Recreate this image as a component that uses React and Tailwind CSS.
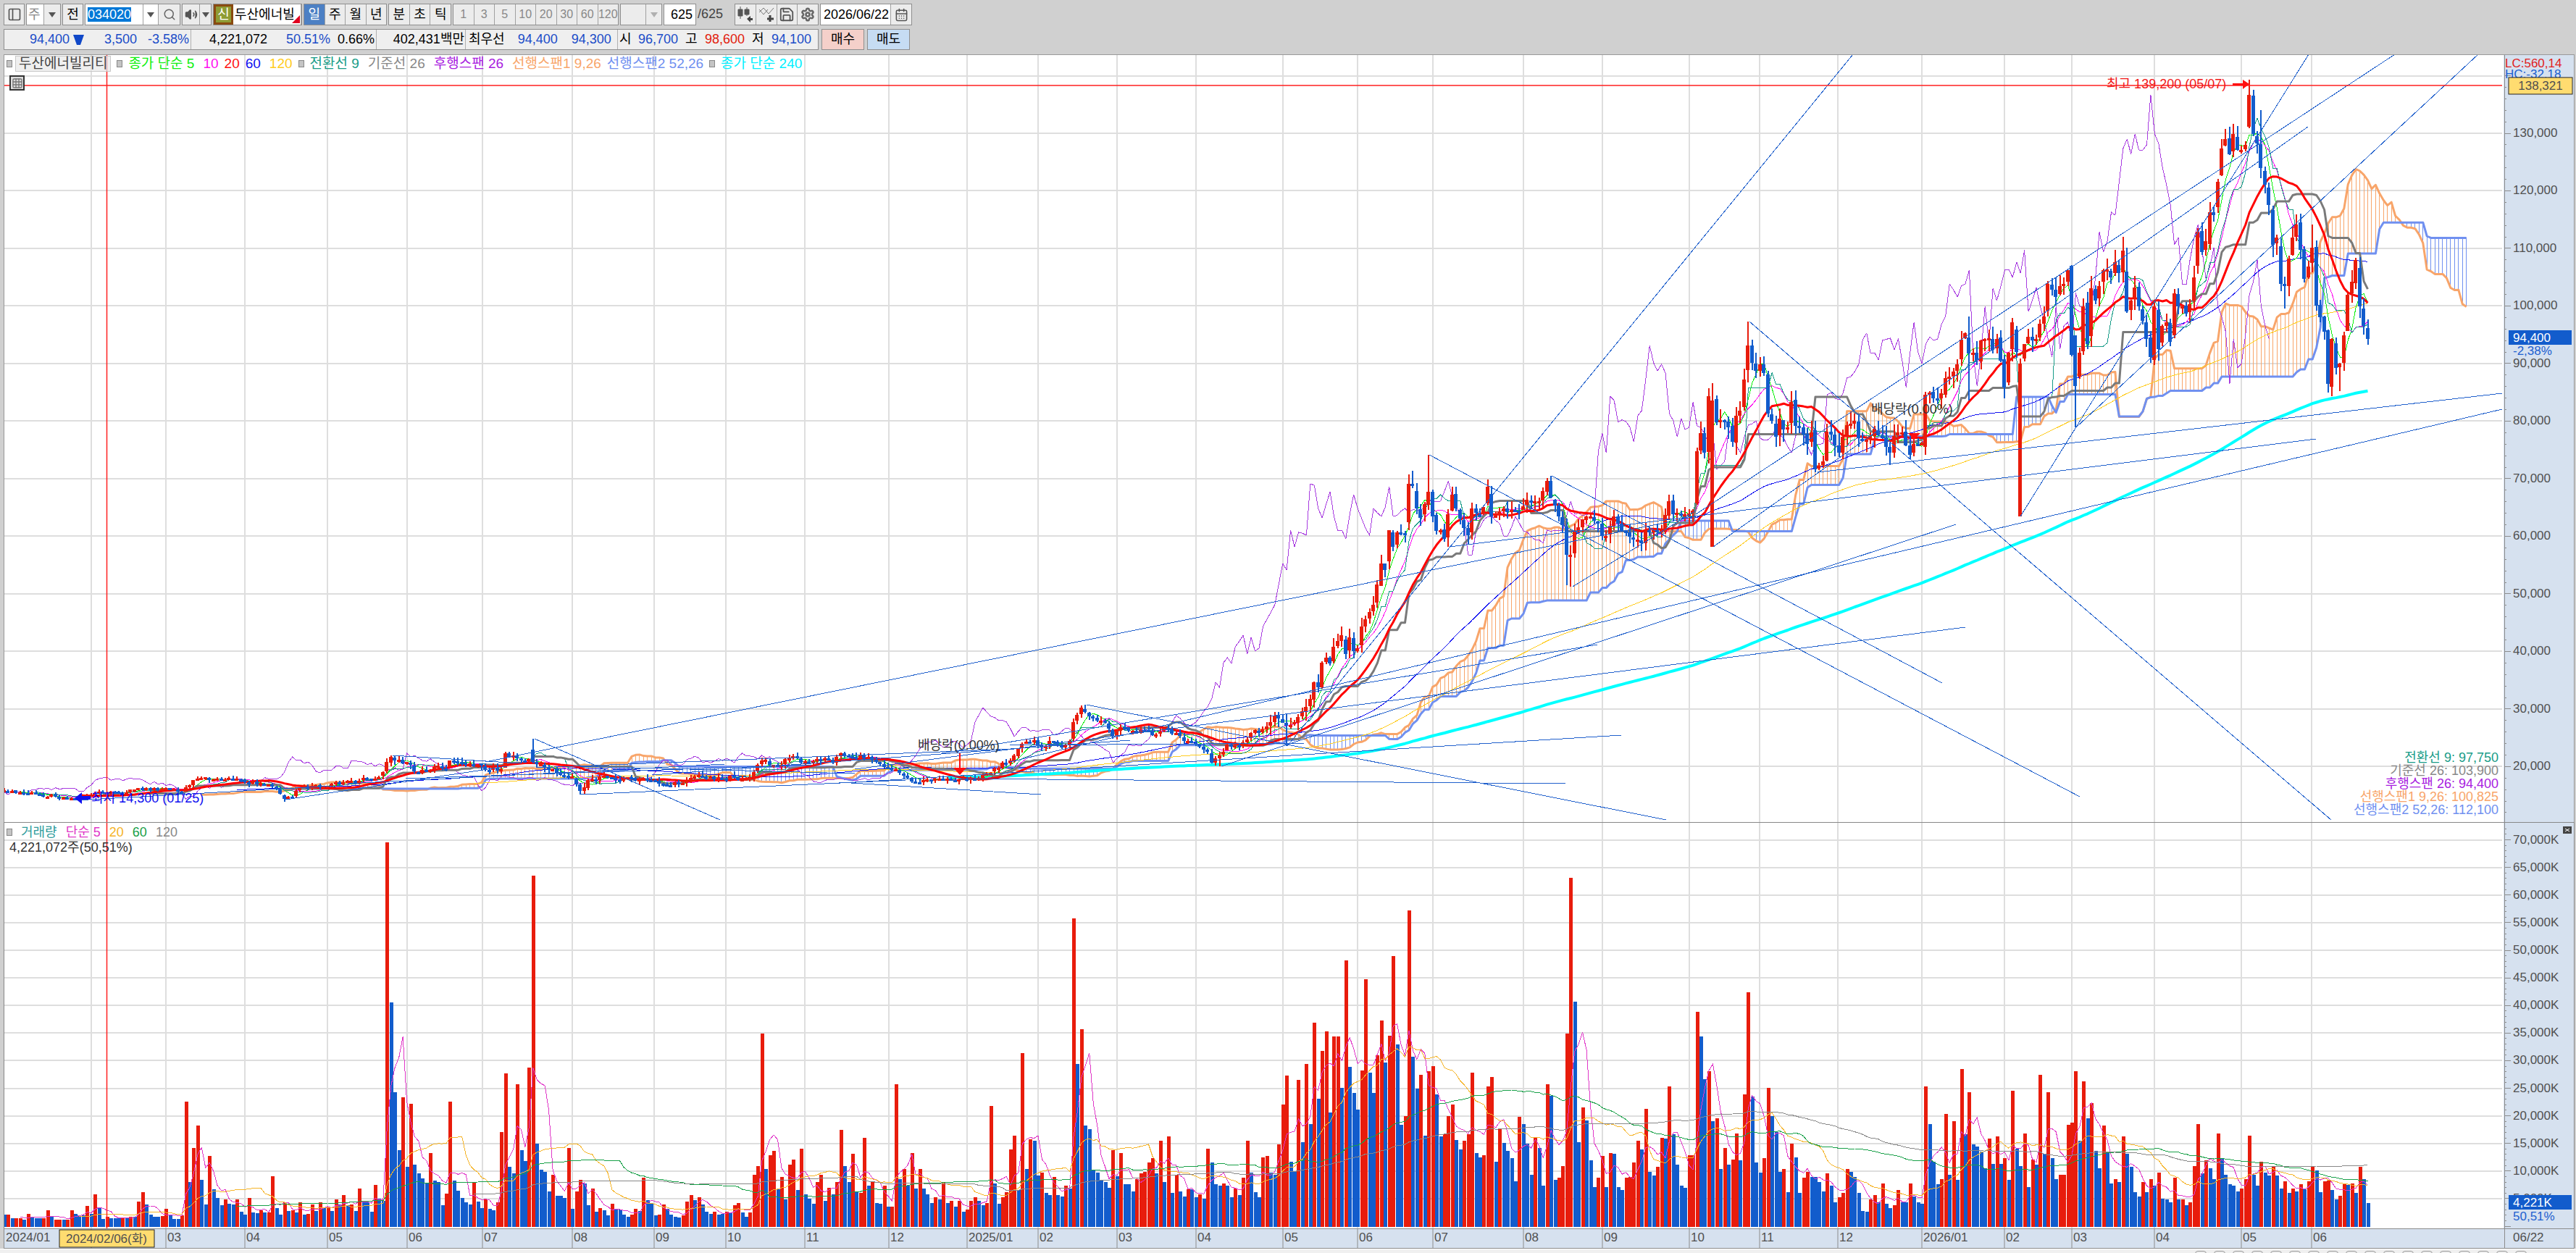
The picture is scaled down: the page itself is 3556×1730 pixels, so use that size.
import {
  Search,
  Volume2,
  Save,
  Settings,
  CalendarDays,
  PanelLeft,
  Grid3x3,
} from "lucide-react";

const BAR_COUNT = 600;
const BAR_STEP = 3262.5 / 599;
const FIRST_X = 6;
const SHIFT = 25;

const barX = (i) => FIRST_X + i * BAR_STEP;
const barIndex = (x) => Math.round((x - FIRST_X) / BAR_STEP);
const priceY = (p) => 184 + (130 - p) * 7.949;
const volumeY = (v) => 1693 - (v / 5) * 38.1;

// small repeatable wobble so the wicks differ from bar to bar
const wobble = (i) => {
  const n = Math.sin(i * 12.9898) * 43758.5453;
  return n - Math.floor(n);
};

// x, y pairs of the closing price on the chart canvas
const CLOSES = [
  6, 1091, 13, 1094, 50, 1096, 75, 1100, 105, 1103, 125, 1097, 136, 1093, 149, 1097, 200, 1088, 232, 1088,
  251, 1093, 275, 1075, 321, 1076, 337, 1080, 356, 1083, 378, 1085, 394, 1103, 401, 1100, 417, 1088, 455, 1085,
  484, 1078, 526, 1073, 540, 1045, 546, 1050, 560, 1052, 571, 1065, 592, 1063, 598, 1058, 614, 1061, 624, 1050,
  646, 1054, 665, 1057, 678, 1063, 691, 1062, 698, 1040, 713, 1047, 738, 1052, 748, 1055, 767, 1067, 793, 1072,
  802, 1092, 812, 1077, 838, 1073, 901, 1077, 927, 1085, 959, 1072, 978, 1073, 1029, 1075, 1036, 1073, 1053, 1050,
  1076, 1057, 1096, 1044, 1108, 1053, 1139, 1047, 1150, 1053, 1162, 1040, 1177, 1045, 1200, 1045, 1217, 1055, 1248, 1070,
  1263, 1080, 1294, 1075, 1334, 1077, 1357, 1070, 1378, 1060, 1398, 1043, 1409, 1027, 1426, 1022, 1438, 1032, 1449, 1023,
  1464, 1032, 1477, 1023, 1484, 997, 1494, 977, 1504, 989, 1524, 997, 1539, 1017, 1549, 1004, 1570, 1010, 1584, 1008,
  1592, 1015, 1610, 1005, 1624, 1012, 1636, 1023, 1653, 1028, 1667, 1038, 1675, 1053, 1685, 1043, 1696, 1028, 1712, 1030,
  1725, 1012, 1742, 1007, 1760, 988, 1776, 1002, 1786, 997, 1798, 982, 1807, 965, 1816, 942, 1820, 949, 1826, 915,
  1832, 908, 1837, 916, 1842, 893, 1852, 877, 1859, 903, 1864, 880, 1870, 899, 1875, 895, 1880, 865, 1886, 855,
  1897, 835, 1902, 807, 1908, 778, 1912, 787, 1919, 732, 1925, 755, 1930, 735, 1939, 739, 1946, 668, 1951, 670,
  1956, 702, 1962, 715, 1973, 679, 1978, 713, 1984, 733, 1989, 732, 1995, 744, 2000, 710, 2006, 683, 2012, 702,
  2027, 739, 2033, 702, 2042, 713, 2049, 700, 2055, 672, 2060, 713, 2073, 702, 2083, 707, 2098, 705, 2111, 690,
  2126, 692, 2137, 664, 2142, 687, 2150, 713, 2158, 725, 2164, 766, 2170, 766, 2176, 733, 2188, 713, 2197, 713,
  2207, 723, 2213, 740, 2219, 740, 2229, 713, 2241, 733, 2264, 727, 2267, 750, 2274, 732, 2293, 732, 2305, 692,
  2312, 710, 2322, 712, 2336, 705, 2343, 623, 2348, 598, 2355, 625, 2360, 547, 2365, 553, 2370, 583, 2378, 573,
  2382, 582, 2387, 590, 2392, 610, 2398, 574, 2404, 567, 2409, 524, 2414, 477, 2420, 501, 2425, 512, 2431, 503,
  2436, 515, 2442, 571, 2447, 581, 2452, 603, 2458, 578, 2463, 593, 2468, 590, 2474, 555, 2481, 588, 2486, 590,
  2493, 613, 2500, 597, 2507, 648, 2512, 643, 2517, 637, 2523, 596, 2529, 600, 2536, 607, 2540, 625, 2545, 603,
  2550, 587, 2556, 585, 2561, 581, 2567, 605, 2573, 608, 2582, 602, 2588, 592, 2600, 605, 2605, 617, 2611, 625,
  2616, 602, 2621, 597, 2626, 597, 2632, 615, 2638, 628, 2643, 613, 2654, 612, 2659, 545, 2665, 542, 2671, 550,
  2676, 552, 2682, 543, 2687, 522, 2692, 520, 2698, 513, 2703, 503, 2708, 469, 2714, 460, 2719, 488, 2724, 487,
  2731, 497, 2736, 470, 2746, 467, 2751, 483, 2758, 468, 2763, 498, 2768, 535, 2774, 487, 2779, 445, 2785, 486,
  2790, 502, 2795, 475, 2801, 465, 2806, 470, 2812, 468, 2817, 447, 2823, 437, 2828, 392, 2834, 400, 2839, 410,
  2845, 395, 2850, 392, 2855, 373, 2861, 490, 2866, 533, 2872, 487, 2877, 423, 2882, 475, 2888, 398, 2893, 415,
  2899, 395, 2904, 373, 2910, 372, 2915, 383, 2921, 362, 2926, 377, 2931, 346, 2937, 430, 2942, 415, 2948, 397,
  2953, 423, 2959, 443, 2964, 468, 2969, 493, 2975, 423, 2980, 482, 2986, 450, 2991, 445, 2996, 472, 3002, 405,
  3007, 423, 3013, 423, 3019, 433, 3024, 420, 3029, 383, 3035, 320, 3040, 348, 3046, 333, 3051, 293, 3057, 297,
  3062, 251, 3068, 205, 3073, 192, 3079, 213, 3084, 185, 3089, 207, 3095, 207, 3100, 200, 3106, 131, 3111, 185,
  3117, 198, 3122, 232, 3127, 255, 3133, 283, 3138, 338, 3143, 328, 3149, 392, 3155, 393, 3160, 357, 3166, 328,
  3171, 310, 3176, 345, 3182, 385, 3187, 368, 3193, 342, 3198, 422, 3204, 438, 3209, 458, 3215, 530, 3220, 468,
  3225, 508, 3230, 502, 3236, 463, 3242, 407, 3247, 389, 3253, 359, 3258, 423, 3263, 450, 3269, 468,
];

// x, high, low, where a wick runs out further than its neighbours; null keeps the default
const SPIKES = [
  [105, null, 1105],
  [738, 1020, null],
  [802, null, 1097],
  [1500, 973, null],
  [1686, null, 1058],
  [1777, null, 1030],
  [1951, 650, null],
  [1973, 628, null],
  [2001, null, 755],
  [2142, 657, null],
  [2164, null, 808],
  [2171, null, 810],
  [2365, 529, 755],
  [2415, 444, null],
  [2507, null, 652],
  [2719, 437, 553],
  [2790, 495, 713],
  [2866, null, 590],
  [2861, 366, null],
  [2931, 327, null],
  [3106, 110, null],
  [3122, 152, null],
  [3155, null, 426],
  [3192, 310, null],
  [3215, null, 542],
  [3230, null, 540],
];

// bars whose body starts away from the previous close
const OPENS = [
  [738, 1035],
  [2343, 695],
  [2365, 755],
  [2790, 713],
  [2861, 367],
  [2866, 463],
  [2937, 375],
  [3106, 175],
];

// x and bar height, below zero for a falling day
const VOLUMES = [
  6, -17, 11, 17, 21, 12, 27, 12, 34, -10, 40, 18, 45, -14, 56, -12, 67, 23, 73, -15, 90, -10, 100, 23, 106, -18,
  115, -16, 122, 29, 128, -18, 133, 45, 138, -26, 143, -11, 150, 14, 156, 19, 161, -12, 175, -12, 183, 14, 193, 35, 199, 48, 203, -31,
  209, -17, 219, -14, 225, 15, 230, 25, 236, -17, 247, -11, 252, 16, 257, 173, 263, -62, 268, 109, 274, 140, 279, -65, 285, -31,
  290, 98, 296, -52, 302, -40, 307, -30, 313, 38, 318, -32, 323, -31, 330, 38, 335, -21, 340, -17, 345, 40, 350, -20, 356, -19,
  361, 23, 366, -20, 372, 20, 377, 70, 383, -26, 388, -17, 394, 34, 399, -22, 405, 23, 410, -20, 416, 34, 421, -17, 426, 18,
  432, 31, 437, -22, 443, 34, 448, -26, 454, 28, 459, -22, 464, 38, 470, -31, 476, 44, 481, -30, 486, 31, 492, -22, 497, 53,
  503, -34, 508, -34, 513, -21, 520, 58, 525, -39, 530, -36, 536, 531, 541, -310, 546, -186, 552, -106, 558, 179, 563, -83,
  568, 170, 574, -86, 579, -74, 585, -67, 590, -60, 596, 102, 602, -64, 607, -62, 611, -30, 617, 46, 623, 173, 628, -64,
  633, -50, 639, -40, 645, -34, 650, -31, 655, 62, 661, -35, 666, -26, 671, 38, 677, -25, 682, -23, 688, 34, 694, 131,
  699, 212, 704, -83, 710, -74, 715, 197, 721, -106, 727, -91, 732, 220, 737, 485, 743, -115, 749, -79, 754, -76, 758, -49,
  765, 72, 770, -43, 776, -43, 781, -40, 787, 109, 792, -25, 797, 49, 802, 65, 808, -60, 813, -30, 819, 53, 824, -21,
  830, 26, 835, -23, 841, -16, 846, 32, 852, -25, 857, -24, 862, -17, 868, -14, 873, 17, 879, 25, 884, -22, 890, 68,
  895, -37, 900, -32, 906, -16, 911, 17, 917, 31, 922, -25, 928, -17, 933, -14, 938, -13, 944, 16, 949, 35, 955, 44,
  960, -37, 965, 41, 971, -31, 976, -21, 982, -18, 987, 21, 993, -17, 998, -18, 1004, 21, 1009, -19, 1015, 30, 1020, 33,
  1025, -20, 1031, -14, 1037, 20, 1042, 72, 1048, 84, 1053, 267, 1058, -80, 1064, 99, 1069, 105, 1074, -52, 1080, 69, 1085, -38,
  1091, 86, 1097, 93, 1102, -51, 1107, 108, 1112, -45, 1118, -39, 1124, -32, 1129, 62, 1135, 72, 1140, -36, 1146, 54, 1151, -45,
  1156, 62, 1162, 134, 1168, -84, 1173, -62, 1178, 101, 1184, -48, 1189, 47, 1195, 123, 1200, -57, 1205, 63, 1211, -33, 1216, -32,
  1222, 57, 1227, -28, 1233, 28, 1238, 197, 1244, -66, 1249, 80, 1254, -57, 1260, 102, 1265, -53, 1271, 80, 1276, -53, 1282, -45,
  1288, -33, 1293, 41, 1298, -38, 1303, 62, 1309, -33, 1315, 36, 1320, -28, 1325, 36, 1331, -21, 1336, 24, 1342, 36, 1347, 41,
  1352, -36, 1358, -30, 1363, 33, 1369, 167, 1375, -60, 1380, -32, 1385, 41, 1391, 48, 1396, 107, 1402, 126, 1407, -51, 1412, 240,
  1418, -80, 1423, 121, 1429, -119, 1435, -71, 1440, 75, 1445, -47, 1450, -44, 1455, 69, 1461, -44, 1467, -42, 1472, 57, 1477, -53,
  1483, 426, 1488, -225, 1493, 273, 1499, -140, 1505, -135, 1510, -78, 1516, -75, 1521, -64, 1526, -62, 1532, -54, 1538, 106, 1543, -70,
  1549, 102, 1554, -59, 1560, -59, 1565, -49, 1571, 66, 1576, 74, 1581, 76, 1587, 89, 1592, 95, 1597, -74, 1603, 119, 1609, -62,
  1614, 125, 1619, -47, 1625, 72, 1630, -49, 1636, -42, 1641, 52, 1647, -52, 1652, -41, 1657, 45, 1663, -39, 1668, 108, 1673, -89,
  1679, -59, 1685, -57, 1690, 60, 1696, -57, 1701, -41, 1706, 53, 1712, -44, 1717, 68, 1723, 119, 1728, -75, 1734, -48, 1739, -41,
  1744, 96, 1750, 98, 1755, -75, 1761, -72, 1766, 114, 1772, 169, 1777, 209, 1783, -90, 1788, -76, 1793, 203, 1799, -117, 1804, 225,
  1810, -142, 1815, 282, 1821, -177, 1826, 243, 1832, 270, 1837, -158, 1842, 263, 1848, 263, 1854, -192, 1859, 368, 1864, -221, 1870, -185,
  1875, -162, 1880, 216, 1886, 342, 1891, -213, 1897, -185, 1902, 237, 1908, 285, 1913, -227, 1919, 264, 1924, 374, 1930, -252, 1935, -141,
  1941, 153, 1946, 437, 1951, -235, 1957, -191, 1962, 210, 1968, -126, 1973, 215, 1979, 222, 1984, -183, 1990, -125, 1995, 128, 2000, 153,
  2006, 169, 2011, -120, 2017, -107, 2022, 119, 2028, 128, 2033, 213, 2038, -102, 2044, -96, 2049, 99, 2055, 194, 2060, 207, 2066, -90,
  2071, 136, 2077, -116, 2082, -105, 2087, -95, 2093, -63, 2098, 152, 2104, -142, 2109, -115, 2115, -72, 2120, 123, 2126, -109, 2131, -57,
  2137, 197, 2142, -181, 2147, -65, 2153, 68, 2158, 84, 2164, 267, 2169, 482, 2174, -311, 2180, -117, 2186, 165, 2191, -147, 2196, -92,
  2202, -55, 2207, 68, 2213, 98, 2218, -55, 2224, 102, 2229, -101, 2234, -55, 2240, -51, 2246, 68, 2251, 69, 2256, 89, 2262, 119,
  2267, -107, 2273, 163, 2278, -76, 2284, -71, 2289, 83, 2295, 123, 2300, -122, 2305, 194, 2311, -128, 2316, -86, 2322, -57, 2327, -54,
  2333, 99, 2338, 99, 2344, 297, 2349, -263, 2354, -204, 2360, 215, 2365, -146, 2371, 150, 2376, -80, 2382, 109, 2387, -86, 2392, 93,
  2398, 129, 2403, -92, 2409, 183, 2415, 324, 2420, -180, 2425, -89, 2430, -75, 2436, 95, 2441, 192, 2447, -153, 2452, -131, 2458, -76,
  2463, 80, 2469, -48, 2474, 115, 2480, -96, 2485, -47, 2491, 68, 2496, 76, 2501, -69, 2507, -69, 2512, -62, 2518, -49, 2523, 74,
  2529, -57, 2534, -34, 2539, 41, 2545, 47, 2550, 80, 2556, -76, 2561, -69, 2567, -47, 2572, -22, 2578, -21, 2583, 38, 2588, 44,
  2594, -34, 2599, 60, 2605, -32, 2610, -26, 2616, 30, 2621, 51, 2627, -34, 2632, -34, 2637, 60, 2643, -42, 2648, -34, 2654, -32,
  2659, 194, 2665, -142, 2670, -90, 2676, -59, 2681, 66, 2686, 156, 2692, -72, 2697, 146, 2703, -65, 2708, 218, 2714, -128, 2719, 186,
  2725, -114, 2730, -111, 2735, -104, 2741, -81, 2746, 122, 2752, -87, 2757, 125, 2763, -87, 2768, 95, 2774, -65, 2779, 188, 2784, -108,
  2790, -84, 2795, 129, 2801, -55, 2806, 93, 2812, -86, 2817, 210, 2823, -101, 2828, 186, 2833, -95, 2839, -66, 2844, 72, 2850, 72,
  2855, 141, 2861, 144, 2866, 215, 2872, -119, 2877, 201, 2882, -150, 2888, 171, 2893, -105, 2899, -81, 2904, 140, 2910, -104, 2915, -60,
  2921, 66, 2926, -62, 2931, 125, 2937, -101, 2942, -83, 2948, -48, 2953, -42, 2959, 62, 2964, -48, 2969, 66, 2975, -57, 2980, 75,
  2986, -39, 2991, -38, 2996, -34, 3002, 68, 3007, -38, 3013, 38, 3019, -30, 3024, 34, 3029, 84, 3035, 142, 3040, -74, 3046, 92,
  3051, -81, 3057, -66, 3062, 129, 3068, -95, 3073, -72, 3078, -59, 3084, -57, 3089, -49, 3095, 53, 3100, 66, 3106, 126, 3111, -72,
  3117, -57, 3122, 90, 3127, -75, 3133, -71, 3138, 84, 3144, -71, 3149, -53, 3155, 63, 3160, -47, 3166, 53, 3171, -49, 3176, 59,
  3182, -52, 3187, 63, 3193, 83, 3198, -78, 3204, -48, 3209, 63, 3215, 64, 3220, -51, 3225, -38, 3231, 43, 3236, 60, 3242, -58,
  3247, 60, 3253, -47, 3258, 83, 3263, -66, 3269, -33,
];

// the label of February 2024 gives way to the cursor's date
const MONTHS = [
  [126, ""], [229, "03"], [338, "04"], [452, "05"], [562, "06"], [666, "07"], [790, "08"], [903, "09"], [1002, "10"],
  [1111, "11"], [1227, "12"], [1335, "2025/01"], [1433, "02"], [1542, "03"], [1651, "04"], [1771, "05"], [1874, "06"],
  [1978, "07"], [2103, "08"], [2212, "09"], [2332, "10"], [2429, "11"], [2537, "12"], [2653, "2026/01"], [2767, "02"],
  [2860, "03"], [2974, "04"], [3094, "05"], [3191, "06"],
];

const TREND_LINES = [
  [670, 1052, 2341, 713], [2001, 755, 3197, 606], [1777, 1030, 2558, 75], [1973, 628, 2871, 1100],
  [2142, 657, 2681, 943], [2415, 444, 3218, 1132], [2365, 755, 3186, 175], [2171, 810, 2341, 705],
  [2341, 710, 3306, 75], [2789, 713, 3187, 75], [2866, 590, 3421, 75], [2509, 652, 3454, 543],
  [1686, 1058, 2700, 724], [1394, 1052, 3454, 565], [1300, 1040, 2205, 890], [1180, 1062, 2713, 866],
  [1180, 1080, 2238, 1015], [542, 1043, 720, 1054], [738, 1020, 994, 1132], [1500, 973, 2300, 1132],
  [802, 1097, 1250, 1077], [1158, 1080, 1437, 1097], [1325, 1075, 2161, 1082], [740, 1060, 1400, 1034],
  [1394, 1029, 1800, 1026], [105, 1105, 460, 1085], [480, 1082, 1000, 1055], [560, 1075, 1120, 1056],
  [800, 1058, 1180, 1068], [900, 1070, 1560, 1022], [394, 1104, 700, 1058],
];

function spread(pairs) {
  const out = new Array(BAR_COUNT).fill(null);
  for (let k = 0; k < pairs.length; k += 2) {
    out[Math.min(BAR_COUNT - 1, barIndex(pairs[k]))] = pairs[k + 1];
  }
  return out;
}

function buildCandles() {
  const close = spread(CLOSES);
  let last = 0;
  for (let i = 1; i < BAR_COUNT; i++) {
    if (close[i] === null) continue;
    for (let j = last + 1; j < i; j++) {
      const t = (j - last) / (i - last);
      close[j] = close[last] + (close[i] - close[last]) * t + (wobble(j) - 0.5) * 6;
    }
    last = i;
  }
  const candles = close.map((c, i) => {
    const prev = i ? close[i - 1] : c;
    const reach = i < 95 ? 4 : i < 320 ? 6 : i < 425 ? 13 : 17;
    const open = c + (prev - c) * (0.7 + wobble(i + 7) * 0.4);
    return {
      open,
      close: c,
      high: Math.min(open, c) - wobble(i + 31) * reach,
      low: Math.max(open, c) + wobble(i + 57) * reach,
    };
  });
  OPENS.forEach(([x, open]) => {
    const bar = candles[barIndex(x)];
    bar.open = open;
    bar.high = Math.min(bar.high, open);
    bar.low = Math.max(bar.close, open) + 2;
  });
  SPIKES.forEach(([x, high, low]) => {
    const bar = candles[barIndex(x)];
    if (high !== null) bar.high = high;
    if (low !== null) bar.low = low;
  });
  return candles;
}

function buildVolumes() {
  const out = spread(VOLUMES);
  for (let i = 1; i < BAR_COUNT; i++) {
    if (out[i] !== null) continue;
    const next = out.slice(i).find((v) => v !== null) ?? out[i - 1];
    const size = Math.min(Math.abs(out[i - 1]), Math.abs(next));
    out[i] = wobble(i) > 0.55 ? size : -size;
  }
  return out;
}

const average = (values, size) =>
  values.map((_, i) => {
    if (i < size - 1) return null;
    let sum = 0;
    for (let j = i - size + 1; j <= i; j++) sum += values[j];
    return sum / size;
  });

const middle = (candles, size) =>
  candles.map((_, i) => {
    if (i < size - 1) return null;
    const part = candles.slice(i - size + 1, i + 1);
    return (Math.min(...part.map((c) => c.high)) + Math.max(...part.map((c) => c.low))) / 2;
  });

const toPoints = (values, shift = 0) =>
  values
    .map((v, i) => (v === null || i + shift < 0 ? null : `${barX(i + shift).toFixed(1)},${v.toFixed(1)}`))
    .filter(Boolean)
    .join(" ");

const candles = buildCandles();
const closes = candles.map((c) => c.close);
const conversion = middle(candles, 9);
const base = middle(candles, 26);
const spanA = base.map((v, i) => (v === null ? null : (v + conversion[i]) / 2));
const spanB = middle(candles, 52);
const volumes = buildVolumes();
const volumeLevels = volumes.map((v) => 1694 - Math.abs(v));

function Line({ points, color, width = 1 }) {
  return (
    <polyline
      points={points}
      fill="none"
      stroke={color}
      strokeWidth={width}
      strokeLinejoin="round"
      shapeRendering={width > 1 ? "auto" : "crispEdges"}
    />
  );
}

function MonthGrid({ top, bottom }) {
  return MONTHS.map(([x]) => (
    <line key={x} x1={x} x2={x} y1={top} y2={bottom} stroke="#dedede" strokeWidth="2" />
  ));
}

function PriceChart() {
  const levels = Array.from({ length: 13 }, (_, i) => 20 + i * 10);
  const ticks = Array.from({ length: 65 }, (_, i) => 12 + i * 2);
  return (
    <svg viewBox="5 75 3549 1060" className="block w-full font-['Liberation_Sans','Noto_Sans_CJK_KR',sans-serif]" role="img" aria-label="두산에너빌리티 일봉">
      <rect x="5" y="75" width="3549" height="1060" fill="#fff" />
      <g shapeRendering="crispEdges">
        <MonthGrid top={75} bottom={1135} />
        {levels.map((p) => (
          <line key={p} x1="5" x2="3454" y1={priceY(p)} y2={priceY(p)} stroke="#dedede" strokeWidth="2" />
        ))}
      </g>

      <g strokeWidth="1" shapeRendering="crispEdges">
        {spanA.map((a, i) => {
          const b = spanB[i];
          if (a === null || b === null) return null;
          return (
            <line key={i} x1={barX(i + SHIFT)} x2={barX(i + SHIFT)} y1={a} y2={b} stroke={a < b ? "#f8a56a" : "#7090f0"} />
          );
        })}
      </g>
      <Line points={toPoints(spanA, SHIFT)} color="#f8a56a" width={3} />
      <Line points={toPoints(spanB, SHIFT)} color="#7090f0" width={3} />
      <Line points={toPoints(closes, -SHIFT)} color="#a83ce0" />
      <Line points={toPoints(average(closes, 240))} color="#00ffff" width={4} />
      <Line points={toPoints(average(closes, 120))} color="#ffcc20" />
      <Line points={toPoints(average(closes, 60))} color="#1010f0" />
      <Line points={toPoints(average(closes, 5))} color="#10f010" />
      <Line points={toPoints(average(closes, 10))} color="#ff10f0" />
      <Line points={toPoints(conversion)} color="#189c88" />
      <Line points={toPoints(base)} color="#7a7a7a" width={3} />
      <Line points={toPoints(average(closes, 20))} color="#ff0000" width={3} />

      <g shapeRendering="crispEdges">
        {candles.map((c, i) => {
          const x = Math.round(barX(i));
          const color = c.close <= c.open ? "#e81c0c" : "#125ccc";
          return (
            <g key={i} fill={color}>
              <rect x={x - 1} y={c.high} width="2" height={c.low - c.high} />
              <rect x={x - 3} y={Math.min(c.open, c.close)} width="5" height={Math.max(3, Math.abs(c.open - c.close))} />
            </g>
          );
        })}
      </g>
      <g stroke="#2060cc" strokeWidth="1" shapeRendering="crispEdges">
        {TREND_LINES.map(([x1, y1, x2, y2], i) => (
          <line key={i} x1={x1} y1={y1} x2={x2} y2={y2} />
        ))}
      </g>

      <path d="M5 118H3454M147.5 75V1135" stroke="#ff2020" strokeWidth="1.5" fill="none" />
      <g fontSize="18">
        <text x="2908" y="122" fill="#f01818">최고 139,200 (05/07)</text>
        <path d="M3082 115h14v-5l9 6-9 7v-5h-14z" fill="#ff1010" />
        <text x="126" y="1108" fill="#1010f0">최저 14,300 (01/25)</text>
        <path d="M103 1102l10-8v5h12v5h-12v6z" fill="#1010f0" />
      </g>
      <g fontSize="18" fill="#333">
        <text x="1267" y="1035">배당락(0.00%)</text>
        <text x="2583" y="571">배당락(0.00%)</text>
        <path d="M1324 1040h2v20h8l-9 10-9-10h8zM2634 598h17l-9 9z" fill="#ff1010" />
      </g>

      {/* price axis */}
      <rect x="3456" y="75" width="98" height="1060" fill="#d6e1ef" />
      <g stroke="#8c8c8c" shapeRendering="crispEdges">
        <line x1="3457" x2="3457" y1="75" y2="1135" />
        {ticks.map((p) => (
          <line key={p} x1="3457" x2={p % 10 ? 3460 : 3466} y1={priceY(p)} y2={priceY(p)} />
        ))}
      </g>
      <g fontSize="17" fill="#505050">
        {levels.slice(0, 12).map((p) => (
          <text key={p} x="3469" y={priceY(p) + 5}>{p},000</text>
        ))}
        <text x="3458" y="93" fill="#e02020">LC:560,14</text>
        <text x="3458" y="108" fill="#1c60d0">HC:-32,18</text>
        <rect x="3463" y="107" width="88" height="23" fill="#ffdc70" stroke="#222" />
        <text x="3507" y="124" textAnchor="middle">138,321</text>
        <rect x="3463" y="456" width="87" height="20" fill="#125ccc" />
        <text x="3469" y="472" fill="#fff">94,400</text>
        <text x="3469" y="490" fill="#1c60d0">-2,38%</text>
      </g>
      <path d="M5 75.5H3554M5.5 75V1135M3553.5 75V1135" stroke="#999" fill="none" />
    </svg>
  );
}

function VolumeChart() {
  const levels = Array.from({ length: 14 }, (_, i) => (i + 1) * 5);
  const ticks = Array.from({ length: 73 }, (_, i) => i);
  return (
    <svg viewBox="5 1135 3549 561" className="block w-full font-['Liberation_Sans','Noto_Sans_CJK_KR',sans-serif]" role="img" aria-label="거래량">
      <rect x="5" y="1135" width="3549" height="561" fill="#fff" />
      <g shapeRendering="crispEdges">
        <MonthGrid top={1135} bottom={1696} />
        {levels.map((v) => (
          <line key={v} x1="5" x2="3454" y1={volumeY(v)} y2={volumeY(v)} stroke="#dedede" strokeWidth="2" />
        ))}
        {volumes.map((v, i) => (
          <rect key={i} x={Math.round(barX(i)) - 2} y={1694 - Math.abs(v)} width="5" height={Math.abs(v)} fill={v > 0 ? "#e81c0c" : "#125ccc"} />
        ))}
      </g>
      <Line points={toPoints(average(volumeLevels, 5))} color="#e038c8" />
      <Line points={toPoints(average(volumeLevels, 20))} color="#f5b428" />
      <Line points={toPoints(average(volumeLevels, 60))} color="#18a048" />
      <Line points={toPoints(average(volumeLevels, 120))} color="#888" />
      <line x1="147.5" x2="147.5" y1="1135" y2="1696" stroke="#ff2020" strokeWidth="1.5" />

      {/* volume axis */}
      <rect x="3456" y="1135" width="98" height="561" fill="#d6e1ef" />
      <g stroke="#8c8c8c" shapeRendering="crispEdges">
        <line x1="3457" x2="3457" y1="1135" y2="1696" />
        {ticks.map((v) => (
          <line key={v} x1="3457" x2={v % 5 ? 3460 : 3466} y1={volumeY(v)} y2={volumeY(v)} />
        ))}
      </g>
      <g fontSize="17" fill="#505050">
        {levels.map((v) => (
          <text key={v} x="3469" y={volumeY(v) + 5}>{v},000K</text>
        ))}
        <rect x="3463" y="1650" width="87" height="20" fill="#125ccc" />
        <text x="3469" y="1666" fill="#fff">4,221K</text>
        <text x="3469" y="1685" fill="#1c60d0">50,51%</text>
      </g>
      <rect x="3538" y="1141" width="12" height="10" fill="#444" />
      <path d="M3541 1144l6 4m0-4l-6 4" stroke="#fff" />
      <path d="M5 1135.5H3554M5.5 1135V1696M3553.5 1135V1696" stroke="#888" strokeWidth="1" fill="none" />
    </svg>
  );
}

function TimeAxis() {
  return (
    <svg viewBox="5 1696 3549 28" className="block w-full font-['Liberation_Sans','Noto_Sans_CJK_KR',sans-serif]" role="img" aria-label="날짜">
      <rect x="5" y="1696" width="3549" height="28" fill="#d6e1ef" />
      <path d="M5 1696.5H3554M5 1723.5H3554M5.5 1696V1724M3457.5 1696V1724M3553.5 1696V1724" stroke="#8c8c8c" fill="none" />
      <g fontSize="17" fill="#505050">
        <text x="8" y="1714">2024/01</text>
        {MONTHS.map(([x, label]) => (
          <g key={x}>
            <line x1={x} x2={x} y1="1696" y2="1723" stroke="#8c8c8c" />
            {label && <text x={x + 2} y="1714">{label}</text>}
          </g>
        ))}
        <rect x="82" y="1698" width="131" height="24" fill="#ffdc70" stroke="#222" />
        <text x="147" y="1716" textAnchor="middle">2024/02/06(화)</text>
        <text x="3469" y="1714">06/22</text>
      </g>
    </svg>
  );
}

function Group({ children, className = "" }) {
  return <div className={`flex h-[30px] border border-[#8f8f8f] divide-x divide-[#a0a0a0] ${className}`}>{children}</div>;
}

function ToolButton({ children, label, className = "bg-[#ececec] text-black" }) {
  return (
    <button type="button" aria-label={label} className={`flex flex-1 items-center justify-center overflow-hidden ${className}`}>
      {children}
    </button>
  );
}

function Arrow({ className = "text-[#555]" }) {
  return (
    <svg width="10" height="7" viewBox="0 0 10 7" className={className}>
      <path d="M0 0h10L5 7z" fill="currentColor" />
    </svg>
  );
}

function Marker() {
  return <span className="h-2.5 w-2 border border-[#888] bg-[#c4c4c4]" />;
}

function Toolbar() {
  return (
    <div className="flex gap-0.5 text-[18px] leading-[28px]">
      <Group className="w-[29px]">
        <ToolButton label="패널"><PanelLeft size={20} color="#555" /></ToolButton>
      </Group>
      <Group className="relative w-[48px] bg-white">
        <select aria-label="종목 구분" className="w-[24px] appearance-none bg-white pl-0.5 text-[#888]">
          <option>주</option>
        </select>
        <span className="flex flex-1 items-center justify-center bg-[#ececec]"><Arrow /></span>
      </Group>
      <Group className="w-[29px]"><ToolButton>전</ToolButton></Group>
      <Group className="w-[132px] bg-white">
        <span className="w-[80px] px-[3px] py-1">
          <input aria-label="종목코드" defaultValue="034020" className="block h-5 w-[60px] bg-[#0078d7] text-white" />
        </span>
        <button type="button" aria-label="최근 종목" className="flex w-[21px] items-center justify-center"><Arrow /></button>
        <ToolButton label="검색"><Search size={18} color="#666" /></ToolButton>
      </Group>
      <Group className="w-[41px]">
        <ToolButton label="소리"><Volume2 size={18} color="#555" fill="#555" /></ToolButton>
        <button type="button" aria-label="소리 설정" className="flex w-[15px] items-center justify-center bg-[#ececec]"><Arrow /></button>
      </Group>
      <Group className="relative w-[123px] bg-white">
        <span className="w-[27px] border-3 border-[#8a4a10] bg-[#8f9c34] text-center leading-[22px] text-white">신</span>
        <span className="flex-1 overflow-hidden whitespace-nowrap pl-0.5">두산에너빌</span>
        <svg width="11" height="11" viewBox="0 0 11 11" className="absolute bottom-0.5 right-0.5"><path d="M11 0v11H0z" fill="#e00020" /></svg>
      </Group>
      <Group className="w-[115px]">
        <ToolButton className="bg-[#4c80c4] text-white">일</ToolButton>
        <ToolButton>주</ToolButton>
        <ToolButton>월</ToolButton>
        <ToolButton>년</ToolButton>
      </Group>
      <Group className="w-[87px]">
        <ToolButton>분</ToolButton>
        <ToolButton>초</ToolButton>
        <ToolButton>틱</ToolButton>
      </Group>
      <Group className="w-[229px]">
        {[1, 3, 5, 10, 20, 30, 60, 120].map((n) => (
          <ToolButton key={n} className="bg-[#ececec] text-[16px] text-[#888]">{n}</ToolButton>
        ))}
      </Group>
      <Group className="w-[58px] bg-[#ececec]">
        <select aria-label="간격" className="w-[35px] appearance-none"><option></option></select>
        <span className="flex flex-1 items-center justify-center"><Arrow className="text-[#b0b0b0]" /></span>
      </Group>
      <Group className="w-[45px]">
        <input aria-label="표시 봉 수" defaultValue="625" className="w-full bg-white pr-1 text-right" />
      </Group>
      <span className="w-[49px] text-[#444]">/625</span>
      <Group className="w-[116px]">
        <ToolButton label="봉 추가">
          <svg width="22" height="24" viewBox="0 0 22 24"><path d="M4 1v17M1 5h6v9H1zM13 2v12M10 5h6v7h-6z" fill="#555" stroke="#555" /><path d="M13 18l5-4v3h3v3h-3v3z" fill="#444" /></svg>
        </ToolButton>
        <ToolButton label="지표 추가">
          <svg width="22" height="24" viewBox="0 0 22 24"><path d="M1 9l6-6 7 8 7-8M1 5l6 7 6-7" fill="none" stroke="#777" /><path d="M16 13v9M12 18h9" stroke="#444" strokeWidth="3" /></svg>
        </ToolButton>
        <ToolButton label="저장"><Save size={22} color="#555" /></ToolButton>
        <ToolButton label="설정"><Settings size={20} color="#666" strokeWidth={3} /></ToolButton>
      </Group>
      <Group className="w-[127px]">
        <input aria-label="날짜" defaultValue="2026/06/22" className="w-[97px] bg-white pl-1" />
        <ToolButton label="달력"><CalendarDays size={19} color="#555" /></ToolButton>
      </Group>
    </div>
  );
}

function Quote() {
  const num = "text-right";
  return (
    <div className="flex gap-1 text-[18px] leading-[27px]">
      <div className="flex h-[29px] w-[1125px] divide-x divide-[#b0b0b0] border border-[#8f8f8f] bg-[#efefef]">
        <div className="flex w-[258px] items-center text-[#1a4cc8]">
          <span className={`w-[90px] ${num}`}>94,400</span>
          <svg width="15" height="14" viewBox="0 0 15 14" className="mx-[5px]"><path d="M0 0h15l-5 14H5z" fill="#1048c8" /></svg>
          <span className={`w-[68px] ${num}`}>3,500</span>
          <span className={`w-[72px] ${num}`}>-3.58%</span>
        </div>
        <div className="flex w-[256px]">
          <span className={`w-[105px] ${num}`}>4,221,072</span>
          <span className={`w-[87px] text-[#1a4cc8] ${num}`}>50.51%</span>
          <span className={`w-[61px] ${num}`}>0.66%</span>
        </div>
        <div className={`w-[123px] pr-px ${num}`}>402,431백만</div>
        <div className="flex w-[210px] pl-1">
          <span>최우선</span>
          <span className={`w-[73px] text-[#1a4cc8] ${num}`}>94,400</span>
          <span className={`w-[74px] text-[#1a4cc8] ${num}`}>94,300</span>
        </div>
        <div className="flex flex-1 gap-2.5 pl-0.5">
          <span className="flex w-[81px] justify-between">시 <b className="font-normal text-[#1a4cc8]">96,700</b></span>
          <span className="flex w-[82px] justify-between">고 <b className="font-normal text-[#e21b0c]">98,600</b></span>
          <span className="flex w-[82px] justify-between">저 <b className="font-normal text-[#1a4cc8]">94,100</b></span>
        </div>
      </div>
      <button type="button" className="h-[29px] w-[59px] border border-[#8f8f8f] bg-[#f5d0ca]">매수</button>
      <button type="button" className="h-[29px] w-[59px] border border-[#8f8f8f] bg-[#c6dcf3]">매도</button>
    </div>
  );
}

export default function App() {
  return (
    <main className="min-h-screen bg-[#d0d0d0] font-['Liberation_Sans','Noto_Sans_CJK_KR',sans-serif] text-black">
      <header className="flex h-[75px] flex-col gap-[5px] pl-[5px] pt-[5px]">
        <Toolbar />
        <Quote />
      </header>

      <section className="relative ml-[5px] mr-0.5">
        <PriceChart />
        <div className="absolute left-1 top-0.5 flex items-center gap-2 whitespace-nowrap text-[19px] leading-[22px]">
          <span className="flex items-center gap-1">
            <Marker />
            <span className="border border-[#c8c8c8] bg-[#e8e8e8]/70 px-1 leading-[20px] text-[#444]">두산에너빌리티</span>
          </span>
          <Marker />
          <span className="text-[#10f010]">종가 단순 5</span>
          <span className="pl-1 text-[#ff10f0]">10</span>
          <span className="text-[#ff1010]">20</span>
          <span className="text-[#1010f0]">60</span>
          <span className="pl-1 text-[#ffcc20]">120</span>
          <Marker />
          <span className="text-[#189c88]">전환선 9</span>
          <span className="pl-1 text-[#888]">기준선 26</span>
          <span className="pl-1 text-[#a820e0]">후행스팬 26</span>
          <span className="pl-1 text-[#f8a56a]">선행스팬1 9,26</span>
          <span className="text-[#7090f0]">선행스팬2 52,26</span>
          <Marker />
          <span className="text-[#00f0ff]">종가 단순 240</span>
        </div>
        <button type="button" aria-label="표 보기" className="absolute left-2 top-[29px] flex h-[21px] w-[21px] items-center justify-center border-2 border-[#333] bg-[#ddd]">
          <Grid3x3 size={16} color="#777" />
        </button>
        <div className="absolute bottom-2 right-[105px] text-right text-[18px] leading-[18px]">
          <p className="text-[#189c88]">전환선 9: 97,750</p>
          <p className="text-[#888]">기준선 26: 103,900</p>
          <p className="text-[#a820e0]">후행스팬 26: 94,400</p>
          <p className="text-[#f8a56a]">선행스팬1 9,26: 100,825</p>
          <p className="text-[#7090f0]">선행스팬2 52,26: 112,100</p>
        </div>
      </section>

      <section className="relative ml-[5px] mr-0.5">
        <VolumeChart />
        <div className="absolute left-1 top-[3px] whitespace-nowrap text-[18px] leading-[22px]">
          <div className="flex items-center gap-3">
            <Marker />
            <span className="text-[#309c9c]">거래량</span>
            <span className="text-[#e038c8]">단순 5</span>
            <span className="text-[#f5b428]">20</span>
            <span className="text-[#18a048]">60</span>
            <span className="text-[#888]">120</span>
          </div>
          <p className="pl-1 leading-[20px] text-[#333]">4,221,072주(50,51%)</p>
        </div>
      </section>

      <div className="ml-[5px] mr-0.5">
        <TimeAxis />
      </div>
      <footer className="flex h-1.5 justify-end gap-2.5 overflow-hidden border-t border-white bg-[#f0f0f0] pr-[68px]">
        {Array.from({ length: 18 }, (_, i) => (
          <span key={i} className="mt-0.5 h-3 w-4 rounded-sm border border-[#999]" />
        ))}
      </footer>
    </main>
  );
}
